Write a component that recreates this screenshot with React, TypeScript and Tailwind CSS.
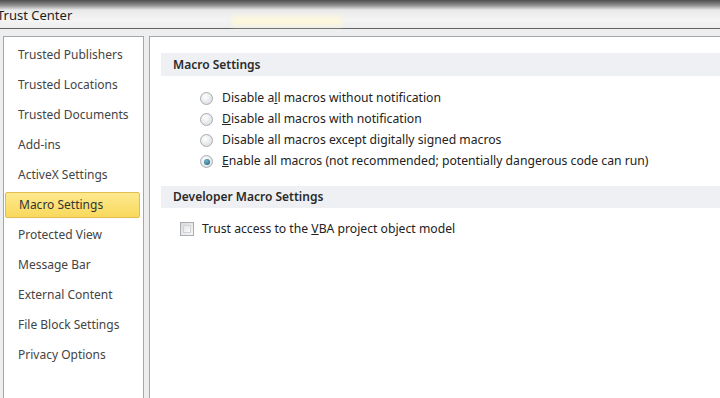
import React from "react";

const menu = [
  "Trusted Publishers",
  "Trusted Locations",
  "Trusted Documents",
  "Add-ins",
  "ActiveX Settings",
  "Macro Settings",
  "Protected View",
  "Message Bar",
  "External Content",
  "File Block Settings",
  "Privacy Options",
];

function Radio({ checked }: { checked?: boolean }) {
  return (
    <span className="relative flex h-[13px] w-[13px] shrink-0 items-center justify-center rounded-full border border-[#a9adb2] bg-[radial-gradient(circle_at_40%_35%,#ffffff,#d4d6d9)]">
      {checked && (
        <span className="h-[6px] w-[6px] rounded-full bg-[radial-gradient(circle_at_40%_35%,#6fb3c9,#1d5f78)]" />
      )}
    </span>
  );
}

export default function App() {
  const font = { fontFamily: '"Noto Sans", "Open Sans", sans-serif' };
  return (
    <div
      className="relative h-[398px] w-[720px] overflow-hidden bg-[#eceef0]"
      style={font}
    >
      {/* title bar */}
      <div className="flex h-[29px] items-end border-b border-[#626262] bg-[linear-gradient(to_bottom,#4e4e4e_0px,#8a8a8a_5px,#e9e9e9_10px,#f4f4f4_20px,#ececec_29px)]">
        <div className="ml-[-3px] pb-[6px] text-[13px] leading-none text-[#1e1e1e]">
          Trust Center
        </div>
        <div className="ml-[160px] mb-[2px] h-[10px] w-[110px] bg-[#fbf6dc] blur-[2px]" />
      </div>

      <div className="flex h-full pt-[7px] pl-[3px]">
        {/* left nav */}
        <div className="w-[141px] shrink-0 self-stretch border border-[#a3a6aa] bg-white pt-[3px]">
          {menu.map((m) => {
            const sel = m === "Macro Settings";
            return (
              <div key={m} className="py-[2px] pl-[1px] pr-[3px]">
                <div
                  className={
                    "flex h-[26px] items-center rounded-[2px] pl-[13px] text-[12px] " +
                    (sel
                      ? "border border-[#e2bd4f] bg-[linear-gradient(to_bottom,#fde98f,#f9d95c)] pl-[12px] text-[#333]"
                      : "text-[#444]")
                  }
                >
                  {m}
                </div>
              </div>
            );
          })}
        </div>

        {/* right pane */}
        <div className="ml-[5px] flex-1 self-stretch border-l border-t border-[#a3a6aa] bg-white pt-[16px] pl-[11px]">
          <div className="flex h-[23px] items-center bg-[#eef0f3] pl-[12px] text-[12px] font-semibold text-[#2a2a2a]">
            Macro Settings
          </div>
          <div className="mt-[12px] pl-[39px] text-[12.2px] text-[#222]">
            <div className="flex h-[21px] items-center gap-[9px]">
              <Radio />
              <span>
                Disable a<u>l</u>l macros without notification
              </span>
            </div>
            <div className="flex h-[21px] items-center gap-[9px]">
              <Radio />
              <span>
                <u>D</u>isable all macros with notification
              </span>
            </div>
            <div className="flex h-[21px] items-center gap-[9px]">
              <Radio />
              <span>Disable all macros except digitally signed macros</span>
            </div>
            <div className="flex h-[21px] items-center gap-[9px]">
              <Radio checked />
              <span>
                <u>E</u>nable all macros (not recommended; potentially dangerous code can run)
              </span>
            </div>
          </div>
          <div className="mt-[14px] flex h-[22px] items-center bg-[#eef0f3] pl-[12px] text-[12px] font-semibold text-[#2a2a2a]">
            Developer Macro Settings
          </div>
          <div className="mt-[11px] flex h-[20px] items-center gap-[8px] pl-[19px] text-[12.2px] text-[#222]">
            <span className="h-[14px] w-[14px] shrink-0 border border-[#a9adb2] bg-[linear-gradient(135deg,#d9dbde,#f7f7f7)] p-[2px]">
              <span className="block h-full w-full border border-[#d0d2d5] bg-[linear-gradient(135deg,#e3e5e8,#fbfbfb)]" />
            </span>
            <span>
              Trust access to the <u>V</u>BA project object model
            </span>
          </div>
        </div>
      </div>
    </div>
  );
}
